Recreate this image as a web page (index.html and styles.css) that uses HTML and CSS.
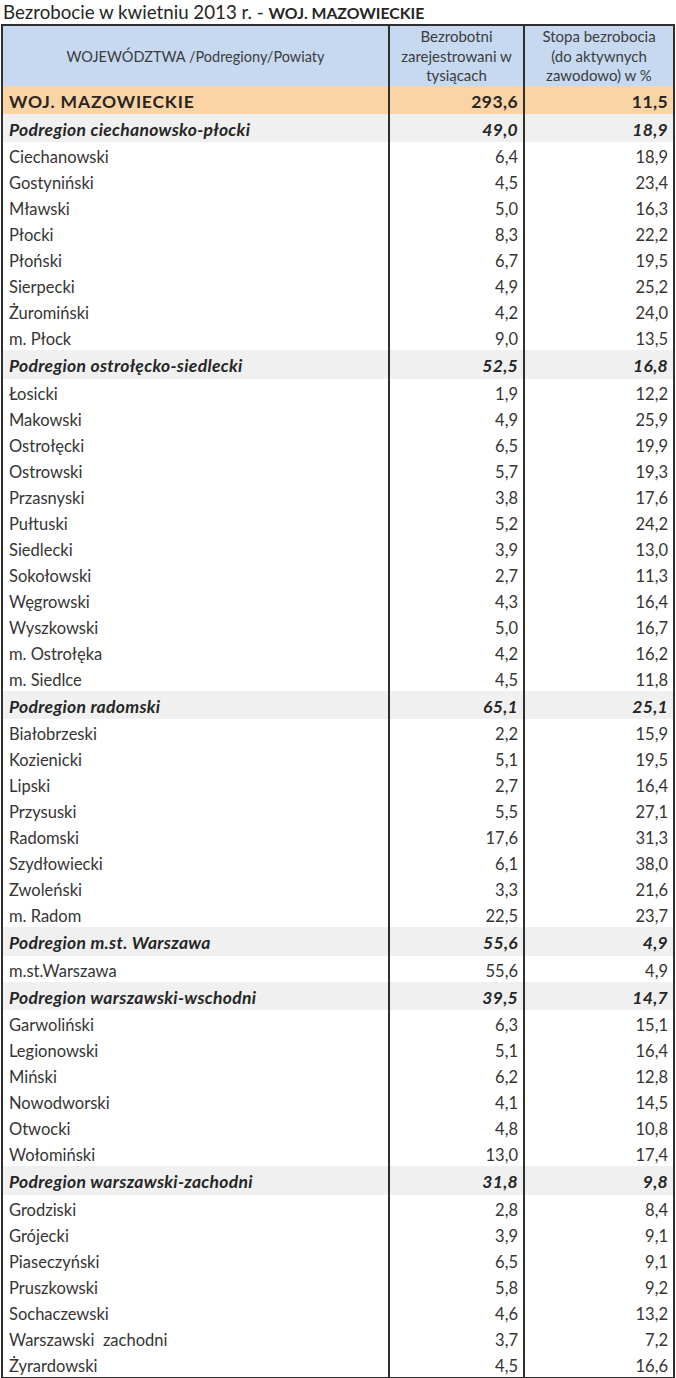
FILE: index.html
```html
<!DOCTYPE html>
<html lang="pl">
<head>
<meta charset="utf-8">
<title>Bezrobocie w kwietniu 2013 r. - WOJ. MAZOWIECKIE</title>
<link rel="stylesheet" href="styles.css">
</head>
<body>
<h1 class="title">Bezrobocie w kwietniu 2013 r. - <strong>WOJ. MAZOWIECKIE</strong></h1>
<table class="data">
  <colgroup><col class="c-name"><col class="c-num"><col class="c-rate"></colgroup>
  <thead>
    <tr class="head">
      <th class="h-name">WOJEWÓDZTWA /Podregiony/Powiaty</th>
      <th class="h-num">Bezrobotni<br>zarejestrowani w<br>tysiącach</th>
      <th class="h-num">Stopa bezrobocia<br>(do aktywnych<br>zawodowo) w %</th>
    </tr>
  </thead>
  <tbody>
    <tr class="woj"><td>WOJ. MAZOWIECKIE</td><td>293,6</td><td>11,5</td></tr>
    <tr class="sub"><td>Podregion ciechanowsko-płocki</td><td>49,0</td><td>18,9</td></tr>
    <tr><td>Ciechanowski</td><td>6,4</td><td>18,9</td></tr>
    <tr><td>Gostyniński</td><td>4,5</td><td>23,4</td></tr>
    <tr><td>Mławski</td><td>5,0</td><td>16,3</td></tr>
    <tr><td>Płocki</td><td>8,3</td><td>22,2</td></tr>
    <tr><td>Płoński</td><td>6,7</td><td>19,5</td></tr>
    <tr><td>Sierpecki</td><td>4,9</td><td>25,2</td></tr>
    <tr><td>Żuromiński</td><td>4,2</td><td>24,0</td></tr>
    <tr><td>m. Płock</td><td>9,0</td><td>13,5</td></tr>
    <tr class="sub"><td>Podregion ostrołęcko-siedlecki</td><td>52,5</td><td>16,8</td></tr>
    <tr><td>Łosicki</td><td>1,9</td><td>12,2</td></tr>
    <tr><td>Makowski</td><td>4,9</td><td>25,9</td></tr>
    <tr><td>Ostrołęcki</td><td>6,5</td><td>19,9</td></tr>
    <tr><td>Ostrowski</td><td>5,7</td><td>19,3</td></tr>
    <tr><td>Przasnyski</td><td>3,8</td><td>17,6</td></tr>
    <tr><td>Pułtuski</td><td>5,2</td><td>24,2</td></tr>
    <tr><td>Siedlecki</td><td>3,9</td><td>13,0</td></tr>
    <tr><td>Sokołowski</td><td>2,7</td><td>11,3</td></tr>
    <tr><td>Węgrowski</td><td>4,3</td><td>16,4</td></tr>
    <tr><td>Wyszkowski</td><td>5,0</td><td>16,7</td></tr>
    <tr><td>m. Ostrołęka</td><td>4,2</td><td>16,2</td></tr>
    <tr><td>m. Siedlce</td><td>4,5</td><td>11,8</td></tr>
    <tr class="sub"><td>Podregion radomski</td><td>65,1</td><td>25,1</td></tr>
    <tr><td>Białobrzeski</td><td>2,2</td><td>15,9</td></tr>
    <tr><td>Kozienicki</td><td>5,1</td><td>19,5</td></tr>
    <tr><td>Lipski</td><td>2,7</td><td>16,4</td></tr>
    <tr><td>Przysuski</td><td>5,5</td><td>27,1</td></tr>
    <tr><td>Radomski</td><td>17,6</td><td>31,3</td></tr>
    <tr><td>Szydłowiecki</td><td>6,1</td><td>38,0</td></tr>
    <tr><td>Zwoleński</td><td>3,3</td><td>21,6</td></tr>
    <tr><td>m. Radom</td><td>22,5</td><td>23,7</td></tr>
    <tr class="sub"><td>Podregion m.st. Warszawa</td><td>55,6</td><td>4,9</td></tr>
    <tr><td>m.st.Warszawa</td><td>55,6</td><td>4,9</td></tr>
    <tr class="sub"><td>Podregion warszawski-wschodni</td><td>39,5</td><td>14,7</td></tr>
    <tr><td>Garwoliński</td><td>6,3</td><td>15,1</td></tr>
    <tr><td>Legionowski</td><td>5,1</td><td>16,4</td></tr>
    <tr><td>Miński</td><td>6,2</td><td>12,8</td></tr>
    <tr><td>Nowodworski</td><td>4,1</td><td>14,5</td></tr>
    <tr><td>Otwocki</td><td>4,8</td><td>10,8</td></tr>
    <tr><td>Wołomiński</td><td>13,0</td><td>17,4</td></tr>
    <tr class="sub"><td>Podregion warszawski-zachodni</td><td>31,8</td><td>9,8</td></tr>
    <tr><td>Grodziski</td><td>2,8</td><td>8,4</td></tr>
    <tr><td>Grójecki</td><td>3,9</td><td>9,1</td></tr>
    <tr><td>Piaseczyński</td><td>6,5</td><td>9,1</td></tr>
    <tr><td>Pruszkowski</td><td>5,8</td><td>9,2</td></tr>
    <tr><td>Sochaczewski</td><td>4,6</td><td>13,2</td></tr>
    <tr><td>Warszawski&nbsp; zachodni</td><td>3,7</td><td>7,2</td></tr>
    <tr><td>Żyrardowski</td><td>4,5</td><td>16,6</td></tr>
  </tbody>
</table>
</body>
</html>
```
FILE: styles.css
```css
html, body {
  margin: 0;
  padding: 0;
  background: #ffffff;
}

body {
  font-family: Lato, "Open Sans", "DejaVu Sans", sans-serif;
  color: #2e2e2e;
}

.title {
  margin: 0;
  padding: 0 0 0 3px;
  height: 24px;
  font-size: 18.7px;
  font-weight: 400;
  line-height: 24px;
  color: #262626;
  white-space: nowrap;
}

.title strong {
  font-size: 15.8px;
  font-weight: 700;
}

.data {
  margin-left: 1px;
  width: 674px;
  table-layout: fixed;
  border-collapse: separate;
  border-spacing: 0;
  border: 2px solid #2f2f2f;
}

.c-name { width: 385px; }
.c-num { width: 135px; }
.c-rate { width: 150px; }

.data th,
.data td {
  padding: 0;
  vertical-align: middle;
}

.data th + th,
.data td + td {
  border-left: 2px solid #2f2f2f;
}

.head {
  height: 58px;
}

.head th {
  background: #c6d9f1;
  font-weight: 400;
  font-size: 15px;
  line-height: 19.5px;
  color: #3c3c3c;
  text-align: center;
  padding-top: 1px;
}

.head th.h-name {
  font-size: 14.5px;
}

.data tbody tr {
  height: 26px;
}

.data td {
  font-size: 16.5px;
  line-height: 20px;
  color: #353535;
  text-align: right;
  padding: 4px 5px 0 0;
}

.data td:first-child {
  text-align: left;
  padding-left: 6px;
  padding-right: 0;
}

.data tbody tr.woj {
  height: 28px;
}

.woj td {
  background: #fbd4a6;
  font-weight: 700;
  font-size: 17.5px;
  letter-spacing: 0.4px;
  color: #2a2520;
}

.woj td:first-child {
  letter-spacing: 0.8px;
}

.data tbody tr.sub {
  height: 28.5px;
}

.sub td {
  background: #f0f0f0;
  font-weight: 700;
  font-style: italic;
  font-size: 17.5px;
  letter-spacing: 0.3px;
  color: #262626;
}
```
